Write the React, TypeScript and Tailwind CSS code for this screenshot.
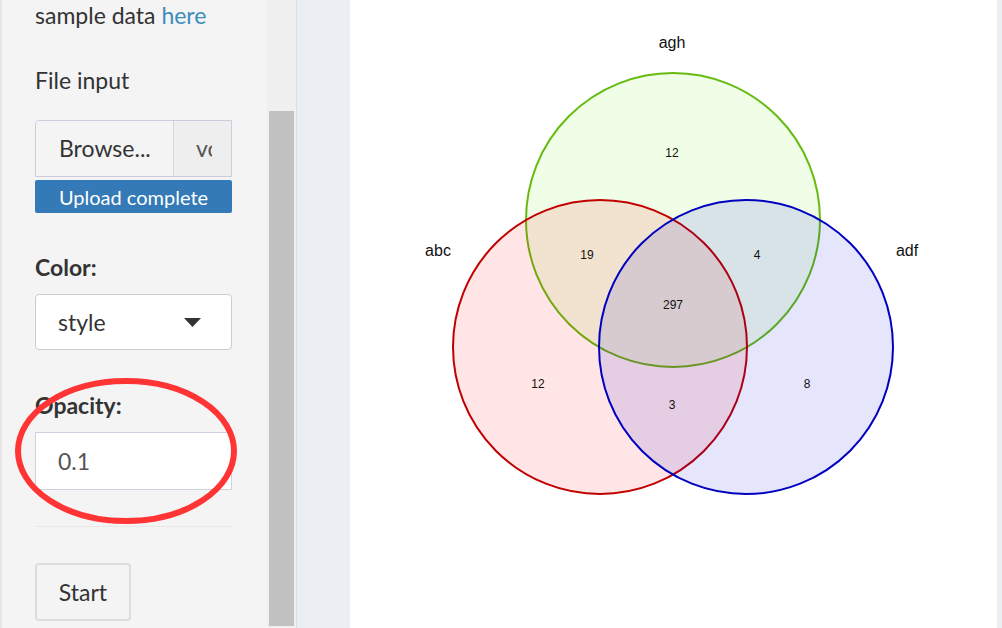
import React from "react";

const sans = { fontFamily: '"Source Sans Pro", Lato, "Open Sans", sans-serif' };

function Venn() {
  return (
    <svg width={647} height={628} viewBox="350 0 647 628" className="block">
      <g fontFamily='"Liberation Sans", Arial, sans-serif' fill="#111" textAnchor="middle">
        <circle cx={673} cy={220} r={147} fill="#6aeb10" fillOpacity={0.1} stroke="#66bb11" strokeWidth={2} />
        <circle cx={600} cy={347} r={147} fill="#ff0000" fillOpacity={0.1} stroke="#c00000" strokeWidth={2} />
        <circle cx={746} cy={347} r={147} fill="#0000dd" fillOpacity={0.1} stroke="#0000c0" strokeWidth={2} />
        <text x={672} y={48} fontSize={16}>agh</text>
        <text x={438} y={256} fontSize={16}>abc</text>
        <text x={907} y={256} fontSize={16}>adf</text>
        <text x={672} y={157} fontSize={12}>12</text>
        <text x={587} y={259} fontSize={12}>19</text>
        <text x={757} y={259} fontSize={12}>4</text>
        <text x={673} y={309} fontSize={12}>297</text>
        <text x={538} y={388} fontSize={12}>12</text>
        <text x={672} y={409} fontSize={12}>3</text>
        <text x={807} y={388} fontSize={12}>8</text>
      </g>
    </svg>
  );
}

export default function App() {
  return (
    <div className="relative flex h-[628px] w-[1002px] overflow-hidden bg-white">
      <div className="w-[2px] bg-[#e6e6e6]" />
      <div className="w-[265px] bg-[#f4f4f4] pl-[33px] text-[23px] text-[#333]" style={sans}>
        <div className="w-[197px]">
          <div className="pt-[1px] leading-[28px] whitespace-nowrap">
            sample data <span className="text-[#3c8dbc]">here</span>
          </div>
          <div className="mt-[37px] leading-[28px]">File input</div>
          <div className="mt-[26px] flex h-[57px] overflow-hidden rounded-tl-[4px] border border-[#ccd] ">
            <div className="flex w-[138px] items-center border-r border-[#d4d8e0] bg-[#f4f4f4] pl-[23px] text-[#333]">
              Browse...
            </div>
            <div className="flex flex-1 items-center overflow-hidden bg-[#eeeeee] pl-[22px] text-[#555]">
              <span className="w-[16px] overflow-hidden whitespace-nowrap">vo</span>
            </div>
          </div>
          <div className="mt-[3px] flex h-[33px] items-center justify-center rounded-[2px] bg-[#337ab7] text-[20px] text-white">
            Upload complete
          </div>
          <div className="mt-[40px] font-bold leading-[28px]">Color:</div>
          <div className="mt-[13px] flex h-[56px] items-center justify-between rounded-[4px] border border-[#cccccc] bg-white pl-[22px] pr-[30px] text-[#333]">
            <span>style</span>
            <svg width={17} height={9} viewBox="0 0 17 9">
              <path d="M0 0 L17 0 L8.5 9 Z" fill="#333" />
            </svg>
          </div>
          <div className="mt-[41px] font-bold leading-[28px]">Opacity:</div>
          <div className="mt-[13px] flex h-[58px] items-center border border-[#cdd3de] bg-white pl-[22px] text-[#555]">
            0.1
          </div>
          <div className="mt-[36px] h-px bg-[#e8e8e8]" />
          <div className="mt-[36px] flex h-[58px] w-[96px] items-center justify-center rounded-[4px] border-2 border-[#dddddd] bg-[#f4f4f4] text-[#333]">
            Start
          </div>
        </div>
      </div>
      <div className="relative w-[29px] bg-[#f0f0f0]">
        <div className="absolute left-[2px] top-[111px] h-[515px] w-[25px] bg-[#c1c1c1]" />
      </div>
      <div className="w-px bg-[#dedede]" />
      <div className="w-[53px] bg-[#ebeff4]" />
      <div className="w-[647px] bg-white">
        <Venn />
      </div>
      <div className="flex-1 bg-[#ebeff4]" />
      <svg className="pointer-events-none absolute left-0 top-0" width={260} height={628}>
        <ellipse cx={126} cy={451} rx={108} ry={70} fill="none" stroke="#ff3535" strokeWidth={6} />
      </svg>
    </div>
  );
}
